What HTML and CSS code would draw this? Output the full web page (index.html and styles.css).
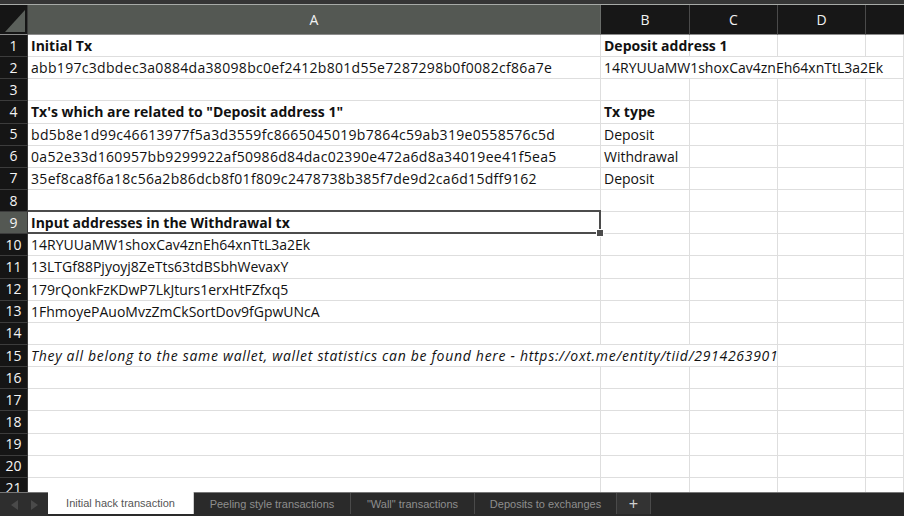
FILE: index.html
```html
<!DOCTYPE html>
<html>
<head>
<meta charset="utf-8">
<link rel="stylesheet" href="styles.css">
</head>
<body>
<div class="app">
  <div class="topstrip"></div>
  <div class="sheet">
    <div class="corner"><svg width="27" height="29" viewBox="0 0 27 29"><polygon points="5,27 25,27 25,5" fill="#5b605b"/></svg></div>
    <div class="ch ch-sel">A</div>
    <div class="ch">B</div>
    <div class="ch">C</div>
    <div class="ch">D</div>
    <div class="ch ch-last"></div>

    <div class="rh">1</div>
    <div class="c b">Initial Tx</div>
    <div class="c b">Deposit address 1</div>
    <div class="c"></div><div class="c"></div><div class="c"></div>

    <div class="rh">2</div>
    <div class="c hex">abb197c3dbdec3a0884da38098bc0ef2412b801d55e7287298b0f0082cf86a7e</div>
    <div class="c span4">14RYUUaMW1shoxCav4znEh64xnTtL3a2Ek</div>

    <div class="rh">3</div>
    <div class="c"></div><div class="c"></div><div class="c"></div><div class="c"></div><div class="c"></div>

    <div class="rh">4</div>
    <div class="c b">Tx's which are related to "Deposit address 1"</div>
    <div class="c b">Tx type</div>
    <div class="c"></div><div class="c"></div><div class="c"></div>

    <div class="rh">5</div>
    <div class="c hex">bd5b8e1d99c46613977f5a3d3559fc8665045019b7864c59ab319e0558576c5d</div>
    <div class="c">Deposit</div>
    <div class="c"></div><div class="c"></div><div class="c"></div>

    <div class="rh">6</div>
    <div class="c hex">0a52e33d160957bb9299922af50986d84dac02390e472a6d8a34019ee41f5ea5</div>
    <div class="c">Withdrawal</div>
    <div class="c"></div><div class="c"></div><div class="c"></div>

    <div class="rh">7</div>
    <div class="c hex">35ef8ca8f6a18c56a2b86dcb8f01f809c2478738b385f7de9d2ca6d15dff9162</div>
    <div class="c">Deposit</div>
    <div class="c"></div><div class="c"></div><div class="c"></div>

    <div class="rh">8</div>
    <div class="c"></div><div class="c"></div><div class="c"></div><div class="c"></div><div class="c"></div>

    <div class="rh rh-sel">9</div>
    <div class="c b selected">Input addresses in the Withdrawal tx</div>
    <div class="c"></div><div class="c"></div><div class="c"></div><div class="c"></div>

    <div class="rh">10</div>
    <div class="c">14RYUUaMW1shoxCav4znEh64xnTtL3a2Ek</div>
    <div class="c"></div><div class="c"></div><div class="c"></div><div class="c"></div>

    <div class="rh">11</div>
    <div class="c">13LTGf88Pjyoyj8ZeTts63tdBSbhWevaxY</div>
    <div class="c"></div><div class="c"></div><div class="c"></div><div class="c"></div>

    <div class="rh">12</div>
    <div class="c">179rQonkFzKDwP7LkJturs1erxHtFZfxq5</div>
    <div class="c"></div><div class="c"></div><div class="c"></div><div class="c"></div>

    <div class="rh">13</div>
    <div class="c">1FhmoyePAuoMvzZmCkSortDov9fGpwUNcA</div>
    <div class="c"></div><div class="c"></div><div class="c"></div><div class="c"></div>

    <div class="rh">14</div>
    <div class="c"></div><div class="c"></div><div class="c"></div><div class="c"></div><div class="c"></div>

    <div class="rh">15</div>
    <div class="c i span3">They all belong to the same wallet, wallet statistics can be found here - https://oxt.me/entity/tiid/2914263901</div>
    <div class="c"></div><div class="c"></div>

    <div class="rh">16</div>
    <div class="c"></div><div class="c"></div><div class="c"></div><div class="c"></div><div class="c"></div>
    <div class="rh">17</div>
    <div class="c"></div><div class="c"></div><div class="c"></div><div class="c"></div><div class="c"></div>
    <div class="rh">18</div>
    <div class="c"></div><div class="c"></div><div class="c"></div><div class="c"></div><div class="c"></div>
    <div class="rh">19</div>
    <div class="c"></div><div class="c"></div><div class="c"></div><div class="c"></div><div class="c"></div>
    <div class="rh">20</div>
    <div class="c"></div><div class="c"></div><div class="c"></div><div class="c"></div><div class="c"></div>
    <div class="rh">21</div>
    <div class="c"></div><div class="c"></div><div class="c"></div><div class="c"></div><div class="c"></div>
  </div>
  <div class="tabbar">
    <div class="nav">
      <svg width="8" height="10" viewBox="0 0 8 10"><polygon points="7,0 7,10 0,5" fill="#4a4a4a"/></svg>
      <svg width="8" height="10" viewBox="0 0 8 10"><polygon points="1,0 1,10 8,5" fill="#4a4a4a"/></svg>
    </div>
    <div class="tab tab-active">Initial hack transaction</div>
    <div class="tab tab-w1">Peeling style transactions</div>
    <div class="tab tab-w2">"Wall" transactions</div>
    <div class="tab tab-w3">Deposits to exchanges</div>
    <div class="tab tab-add">+</div>
    <div class="tab-rest"></div>
  </div>
</div>
</body>
</html>
```

FILE: styles.css
```css
html, body {
  margin: 0;
  padding: 0;
}
body {
  width: 904px;
  height: 516px;
  overflow: hidden;
  background: #ffffff;
  font-family: "Open Sans", "Liberation Sans", sans-serif;
}
.app {
  display: flex;
  flex-direction: column;
  height: 516px;
}
.topstrip {
  height: 4px;
  background: #353535;
  border-bottom: 1px solid #a7aaa7;
  flex: none;
}
.sheet {
  flex: 1;
  overflow: hidden;
  display: grid;
  grid-template-columns: 28px 573px 89px 88px 88px 1fr;
  grid-template-rows: 30px;
  grid-auto-rows: 22.15px;
  background: #fff;
}
.corner {
  background: #151515;
  border-right: 1px solid #3a3a3a;
  border-bottom: 1px solid #8c8c8c;
  box-sizing: border-box;
}
.corner svg {
  display: block;
}
.ch {
  background: #171717;
  color: #f2f2f2;
  font-size: 14px;
  display: flex;
  align-items: center;
  justify-content: center;
  border-right: 1px solid #4a4a4a;
  border-bottom: 1px solid #8c8c8c;
  box-sizing: border-box;
}
.ch-sel {
  background: #545853;
  border-right-color: #6a6d6a;
}
.ch-last {
  border-right: none;
}
.rh {
  background: #151515;
  color: #f4f4f4;
  font-size: 14px;
  display: flex;
  align-items: center;
  justify-content: center;
  border-right: 1px solid #3a3a3a;
  border-bottom: 1px solid #3c3c3c;
  box-sizing: border-box;
  line-height: 1;
}
.rh-sel {
  background: #545853;
}
.c {
  border-right: 1px solid #dedede;
  border-bottom: 1px solid #dedede;
  box-sizing: border-box;
  font-size: 14px;
  color: #111;
  padding: 0 0 0 3px;
  white-space: nowrap;
  display: flex;
  align-items: center;
  min-width: 0;
}
.b {
  font-weight: 700;
}
.i {
  font-style: italic;
  letter-spacing: 0.7px;
}
.hex {
  letter-spacing: 0.31px;
}
.span4 {
  grid-column: span 4;
}
.span3 {
  grid-column: span 3;
}
.selected {
  position: relative;
}
.selected::before {
  content: "";
  position: absolute;
  left: 0;
  top: -2px;
  right: -1px;
  bottom: -1px;
  border: 2px solid #4c4c4c;
  border-left: none;
  pointer-events: none;
}
.selected::after {
  content: "";
  position: absolute;
  right: -4px;
  bottom: -4px;
  width: 6px;
  height: 6px;
  background: #4c4c4c;
  border: 1px solid #fff;
}
.tabbar {
  flex: none;
  height: 24px;
  background: #2a2a2a;
  display: flex;
  align-items: stretch;
  font-family: "Liberation Sans", Arial, sans-serif;
  font-size: 11px;
  color: #8e8e8e;
  border-top: 1px solid #777;
  box-sizing: border-box;
}
.nav {
  width: 48px;
  display: flex;
  align-items: center;
  justify-content: center;
  gap: 11px;
  background: #2e2e2e;
}
.tab {
  display: flex;
  align-items: center;
  justify-content: center;
  border-right: 1px solid #4a4a4a;
  margin-bottom: 2px;
}
.tab-active {
  width: 145px;
  background: #ffffff;
  color: #555;
  margin-top: -1px;
  border-right: 1px solid #cfcfcf;
}
.tab-w1 {
  width: 156px;
}
.tab-w2 {
  width: 123px;
}
.tab-w3 {
  width: 141px;
}
.tab-add {
  width: 33px;
  font-size: 16px;
  color: #cfcfcf;
  background: #333;
}
.tab-rest {
  flex: 1;
  background: #262626;
}
```
